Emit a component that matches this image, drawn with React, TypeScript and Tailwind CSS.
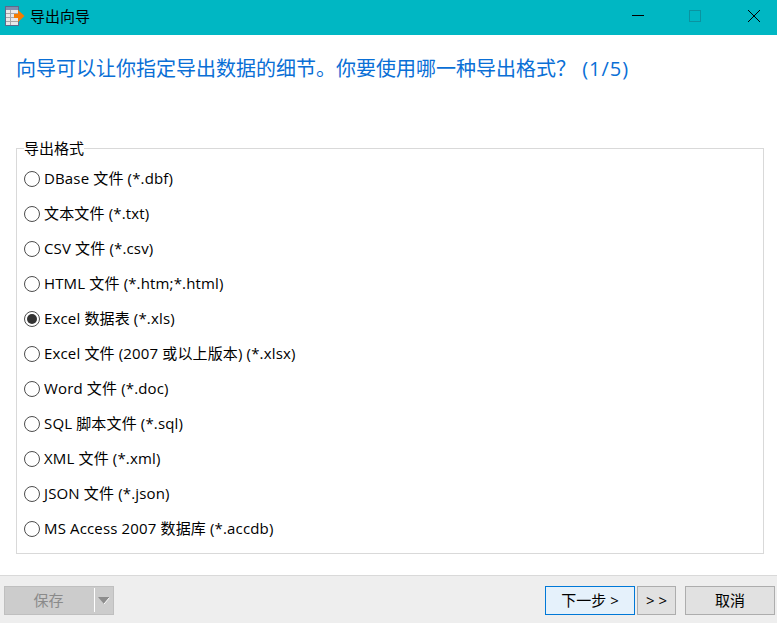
const FONT = "font-['Open_Sans','Noto_Sans_CJK_SC',sans-serif]"

const FORMATS = [
  'DBase 文件 (*.dbf)',
  '文本文件 (*.txt)',
  'CSV 文件 (*.csv)',
  'HTML 文件 (*.htm;*.html)',
  'Excel 数据表 (*.xls)',
  'Excel 文件 (2007 或以上版本) (*.xlsx)',
  'Word 文件 (*.doc)',
  'SQL 脚本文件 (*.sql)',
  'XML 文件 (*.xml)',
  'JSON 文件 (*.json)',
  'MS Access 2007 数据库 (*.accdb)',
]

const AppIcon = () => (
  <svg width="20" height="20" viewBox="0 0 20 20" className="shrink-0">
    <rect x="0.5" y="0.5" width="13" height="19" fill="#e8e8e8" stroke="#5b6b8c" />
    <rect x="1" y="1" width="12" height="3" fill="#7f8fae" />
    <path d="M1 7.5h12M1 11.5h12M1 15.5h12M5.5 4v15" stroke="#a5a5a5" fill="none" />
    <path d="M9 8h4V4l6.5 6-6.5 6v-4H9z" fill="#f57c00" />
  </svg>
)

const Radio = ({ checked }: { checked: boolean }) => (
  <span className="flex items-center justify-center w-4 h-4 rounded-full border border-[#4d4d4d] bg-white shrink-0">
    {checked && <span className="w-2.5 h-2.5 rounded-full bg-[#333333]" />}
  </span>
)

export default function App() {
  return (
    <div className={`flex flex-col w-[777px] h-[623px] bg-white overflow-hidden text-black ${FONT}`}>
      <header className="flex items-center h-[35px] pb-[3px] bg-[#00b7c3] shrink-0">
        <div className="flex items-center gap-[5px] pl-[5px] flex-1">
          <AppIcon />
          <span className="text-[15px]">导出向导</span>
        </div>
        <div className="flex items-center">
          <svg width="46" height="32" viewBox="0 0 46 32"><path d="M18 15.5h12" stroke="#000" /></svg>
          <svg width="46" height="32" viewBox="0 0 46 32" className="ml-[12px]"><rect x="17.5" y="10.5" width="11" height="11" fill="none" stroke="#0a93a0" /></svg>
          <svg width="46" height="32" viewBox="0 0 46 32" className="ml-[13px]"><path d="M17 10l12 12M29 10L17 22" stroke="#000" fill="none" /></svg>
        </div>
      </header>

      <h1 className="pl-[16px] pt-[20px] h-[77px] shrink-0 text-[20px] leading-[27px] font-normal text-[#0a6fd6] [word-spacing:1px]">
        向导可以让你指定导出数据的细节。你要使用哪一种导出格式？ <span className="tracking-[1px]">(1/5)</span>
      </h1>

      <fieldset className="ml-[16px] mr-[13px] h-[415px] mt-[27px] border border-[#d9d9d9] shrink-0 pl-[7px]">
        <legend className="text-[15px] leading-[18px]">导出格式</legend>
        <div className="flex flex-col pt-[4px]">
          {FORMATS.map((label, i) => (
            <label key={label} className="flex items-center gap-[4px] h-[35px] text-[15px] tracking-[0.15px]">
              <Radio checked={i === 4} />
              <span>{label}</span>
            </label>
          ))}
        </div>
      </fieldset>

      <footer className="flex items-center justify-between mt-[21px] flex-1 bg-[#eeeeee] border-t border-[#d9d9d9] pt-[1px] pl-[4px] pr-[2px] text-[15px]">
        <div className="flex items-center w-[110px] h-[29px] bg-[#cccccc] border border-[#bfbfbf] text-[#8a8a8a]">
          <span className="flex-1 text-center pr-[2px]">保存</span>
          <span className="w-px h-[24px] bg-white" />
          <span className="flex items-center justify-center w-[18px]">
            <svg width="12" height="7" viewBox="0 0 12 7">
              <path d="M0 0h12L6 7z" fill="#8c8c8c" />
              <path d="M11.5 0.5L6 7" stroke="#fff" fill="none" />
            </svg>
          </span>
        </div>
        <div className="flex items-center">
          <button className="w-[90px] h-[29px] bg-[#e5f1fb] border border-[#0078d7]">下一步 &gt;</button>
          <button className="w-[39px] h-[29px] ml-[2px] bg-[#e1e1e1] border border-[#adadad]">&gt; &gt;</button>
          <button className="w-[90px] h-[29px] ml-[9px] bg-[#e1e1e1] border border-[#adadad]">取消</button>
        </div>
      </footer>
    </div>
  )
}
